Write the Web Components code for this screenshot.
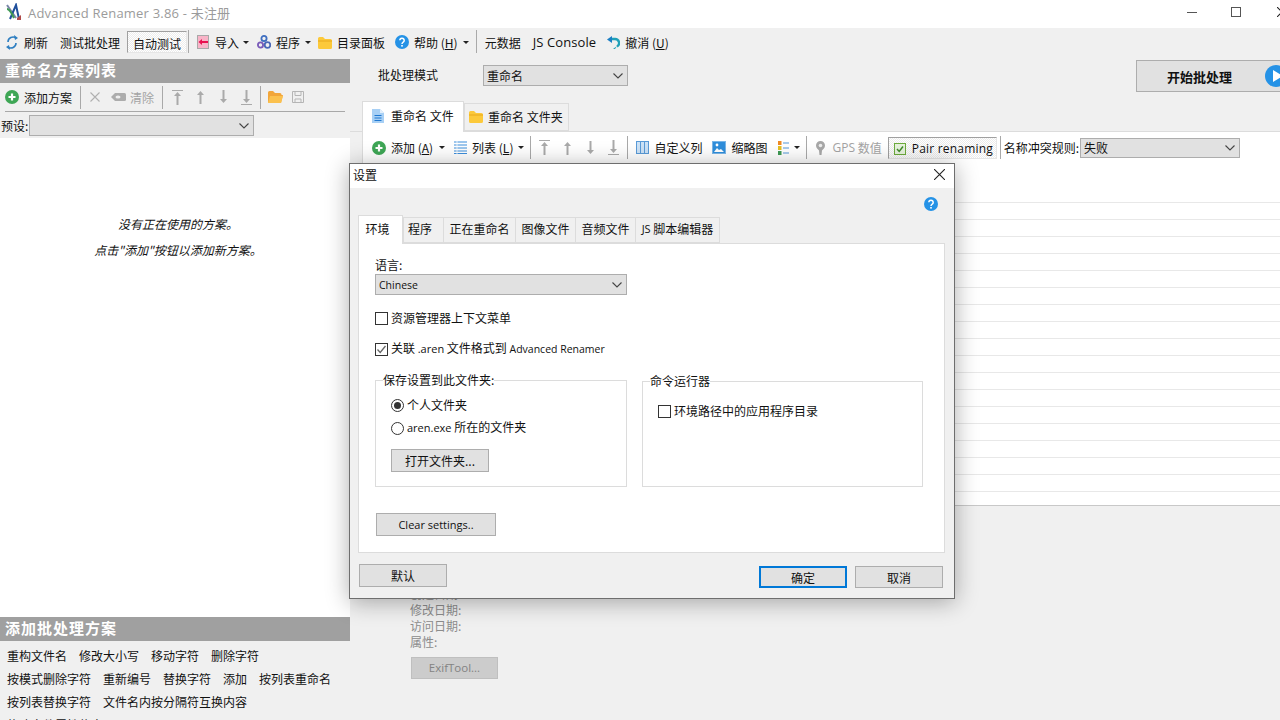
<!DOCTYPE html>
<html>
<head>
<meta charset="utf-8">
<title>Advanced Renamer</title>
<style>
html, body { margin: 0; padding: 0; background: #f0f0f0; overflow: hidden; }
body { font: 12px "Noto Sans CJK SC", "Open Sans", sans-serif; color: #111; }
</style>
</head>
<body>
<app-shell></app-shell>

<script>
const ICONS = {
    logo: [17, 18, '<path d="M1 2l9 13" stroke="#7a86a8" stroke-width="2" fill="none"/><path d="M4 16L10 2l3 14" stroke="#1f4f9c" stroke-width="2" fill="none"/><path d="M1 6c3 0 5 5 7 9" stroke="#3f9a54" stroke-width="2" fill="none"/><path d="M11 15l4-3v5h-4z" fill="#b04a4a"/>'],
    refresh: [12, 15, '<path d="M2 7a5 5 0 0 1 8-4" stroke="#2f7fc1" stroke-width="1.6" fill="none"/><path d="M10 8a5 5 0 0 1-8 4" stroke="#2f7fc1" stroke-width="1.6" fill="none"/><path d="M8 0l4 3-3 2z" fill="#2f7fc1"/><path d="M4 15l-4-3 3-2z" fill="#2f7fc1"/>'],
    import: [12, 14, '<rect x=".5" y=".5" width="11" height="13" fill="#f8b4c8" stroke="#a8a8a8"/><path d="M3 7h8" stroke="#e8114f" stroke-width="2"/><path d="M1.5 7L5 4v6z" fill="#e8114f"/>'],
    gears: [14, 14, '<circle cx="7" cy="3.5" r="2.6" fill="none" stroke="#3f6fc0" stroke-width="1.8"/><circle cx="3.5" cy="10" r="2.6" fill="none" stroke="#7a5bb8" stroke-width="1.8"/><circle cx="10.5" cy="10" r="2.8" fill="none" stroke="#4a68b8" stroke-width="1.8"/>'],
    folder: [14, 13, '<path d="M0 2.5Q0 1 1.5 1H5l2 2h5.500Q14 3 14 4.500V11.500Q14 13 12.500 13H1.500Q0 13 0 11.500z" fill="#fcc93a"/><path d="M0 5h14" stroke="#e8a91c"/>'],
    help: [14, 14, '<circle cx="7" cy="7" r="7" fill="#2592e6"/><path d="M4.800 5.300a2.200 2.100 0 1 1 3.400 1.800C7.300 7.700 7 8 7 9" stroke="#fff" stroke-width="1.500" fill="none"/><rect x="6.200" y="10" width="1.600" height="1.600" fill="#fff"/>'],
    undo: [13, 13, '<path d="M4 3h4a4 4 0 0 1 2 7.500" stroke="#20a0b8" stroke-width="2.400" fill="none"/><path d="M0 3.500L5 0v7z" fill="#1c7fc4"/><path d="M10 10l-2 3h-2z" fill="#20a0b8"/>'],
    plus: [14, 14, '<circle cx="7" cy="7" r="7" fill="#3ea655"/><path d="M7 3.500v7M3.500 7h7" stroke="#fff" stroke-width="2.200"/>'],
    cross: [10, 10, '<path d="M.5.5l9 9M9.500.5l-9 9" stroke="#b0b0b0" stroke-width="1.100"/>'],
    eraser: [15, 8, '<path d="M4 0h9.500Q15 0 15 1.500v5Q15 8 13.500 8H4L0 4z" fill="#acacac"/><ellipse cx="7" cy="4" rx="2.500" ry="1.500" fill="#eee"/>'],
    top: [11, 15, '<path d="M0 .5h11" stroke="#aaa"/><path d="M5.500 2L9 6H2z" fill="#aaa"/><path d="M5.500 5v10" stroke="#aaa" stroke-width="2"/>'],
    up: [7, 14, '<path d="M3.500 1L7 5H0z" fill="#aaa"/><path d="M3.500 4v10" stroke="#aaa" stroke-width="2"/>'],
    down: [7, 14, '<path d="M3.500 13L7 9H0z" fill="#aaa"/><path d="M3.500 0v10" stroke="#aaa" stroke-width="2"/>'],
    bottom: [11, 15, '<path d="M0 14.500h11" stroke="#aaa"/><path d="M5.500 13L9 9H2z" fill="#aaa"/><path d="M5.500 0v10" stroke="#aaa" stroke-width="2"/>'],
    folderDim: [15, 12, '<path d="M0 1.500Q0 0 1.500 0H5l2 2h5Q13.500 2 13.500 3.500V4H15l-2 8H1.500Q0 12 0 10.500z" fill="#f2a63a"/><path d="M2 5h13l-2 7H0z" fill="#fbc14e"/>'],
    save: [12, 12, '<path d="M.5.500h11v11H.500zM3 .500v4h6v-4M3 11.500V8h6v3.500" fill="none" stroke="#b5b5b5"/>'],
    doc: [12, 14, '<path d="M0 0h8l4 4v10H0z" fill="#a8d0f5"/><path d="M8 0l4 4H8z" fill="#e4f0fb"/><path d="M2.500 6.500h7M2.500 9h7M2.500 11.500h7" stroke="#1f78d1" stroke-width="1.200"/>'],
    list: [13, 13, '<path d="M0 1h13M0 4h13M0 7h13M0 10h13M0 12.500h13" stroke="#3d8fdc"/><path d="M3 0v13" stroke="#fff" stroke-width=".8"/>'],
    columns: [13, 13, '<rect x=".5" y=".5" width="12" height="12" fill="#cde3f7" stroke="#5a9bd8"/><path d="M4.500 0v13M8.500 0v13" stroke="#5a9bd8"/>'],
    thumb: [14, 13, '<rect x=".5" y=".5" width="13" height="12" fill="#2f8edb" stroke="#7ab6e8"/><path d="M2 11l3-4 2 2 2-1 3 3z" fill="#fff"/><circle cx="5" cy="4" r="1.400" fill="#fff"/>'],
    listview: [11, 14, '<rect width="3.500" height="4" fill="#f08a24"/><rect y="5" width="3.500" height="4" fill="#e6c020"/><rect y="10" width="3.500" height="4" fill="#3f9a54"/><path d="M5 2h6M5 7h6M5 12h6" stroke="#8cbbe6" stroke-width="1.600"/>'],
    pin: [9, 14, '<path d="M4.500 0a4.500 4.500 0 0 1 4.500 4.500C9 7 7 8 6 9.500L5.500 14h-2L3 9.500C2 8 0 7 0 4.500A4.500 4.500 0 0 1 4.500 0z" fill="#a8a8a8"/><circle cx="4.500" cy="4.500" r="1.800" fill="#eee"/>'],
    checked: [12, 12, '<rect x=".5" y=".5" width="11" height="11" fill="#e6f2dc" stroke="#6cab3c"/><path d="M3 6l2.200 2.400L9 3.500" stroke="#3f8a2a" stroke-width="1.500" fill="none"/>'],
    play: [22, 22, '<circle cx="11" cy="11" r="11" fill="#2592e6"/><path d="M8 5l10 6-10 6z" fill="#fff"/>'],
    min: [10, 1, '<path d="M0 .5h10" stroke="#555"/>'],
    max: [10, 10, '<rect x=".5" y=".5" width="9" height="9" fill="none" stroke="#555"/>'],
    close: [10, 10, '<path d="M0 0l10 10M10 0L0 10" stroke="#222" stroke-width="1.100"/>'],
    close2: [11, 11, '<path d="M0 0l11 11M11 0L0 11" stroke="#222" stroke-width="1.100"/>']
};

const chevron = '<svg width="10" height="6" viewBox="0 0 10 6"><path d="M.5.500L5 5 9.500.500" fill="none" stroke="#444" stroke-width="1.100"/></svg>';

class ArIcon extends HTMLElement {
    connectedCallback() {
        const [w, h, body] = ICONS[this.getAttribute('name')];
        this.attachShadow({ mode: 'open' }).innerHTML = `
            <style>:host { display: inline-flex; flex-shrink: 0; width: ${w}px; height: ${h}px; } svg { display: block; }</style>
            <svg width="${w}" height="${h}" viewBox="0 0 ${w} ${h}">${body}</svg>`;
    }
}

// toolbar button: optional icon, text in the slot, optional dropdown caret
class ToolItem extends HTMLElement {
    connectedCallback() {
        const icon = this.getAttribute('icon');
        const gap = this.getAttribute('gap') || 5;
        const caretGap = this.getAttribute('caret');
        this.attachShadow({ mode: 'open' }).innerHTML = `
            <style>
                :host { display: inline-flex; align-items: center; flex-shrink: 0; height: 22px; white-space: nowrap; box-sizing: border-box; color: #111; }
                :host([disabled]) { color: #a4a4a4; }
                :host([pressed]) {
                    padding: 2px 5px 0;
                    border: 1px solid #e6e6e6;
                    border-top-color: #a0a0a0;
                    border-left-color: #a0a0a0;
                    background: repeating-conic-gradient(#ececec 0 25%, #fff 0 50%) 0 0 / 2px 2px;
                }
                .ic { display: inline-flex; margin-right: ${gap}px; }
                .caret { width: 0; height: 0; margin-left: ${caretGap}px; border: 3px solid transparent; border-top: 3px solid #222; border-bottom: 0; }
                u { text-underline-offset: 1px; }
            </style>
            ${icon ? `<span class="ic"><ar-icon name="${icon}"></ar-icon></span>` : ''}
            <slot></slot>
            ${caretGap !== null ? '<span class="caret"></span>' : ''}`;
    }
}

class ToolSep extends HTMLElement {
    connectedCallback() {
        this.attachShadow({ mode: 'open' }).innerHTML = `
            <style>:host { display: block; flex-shrink: 0; width: 1px; height: 23px; background: #a9a9a9; }</style>`;
    }
}

class ToolBar extends HTMLElement {
    connectedCallback() {
        this.attachShadow({ mode: 'open' }).innerHTML = `
            <style>:host { display: flex; align-items: center; box-sizing: border-box; height: 31px; line-height: 15px; }</style>
            <slot></slot>`;
    }
}

class WinSelect extends HTMLElement {
    connectedCallback() {
        this.attachShadow({ mode: 'open' }).innerHTML = `
            <style>
                :host {
                    display: flex; align-items: center; justify-content: space-between; flex-shrink: 0;
                    box-sizing: border-box; height: 21px; padding: 0 4px 0 3px;
                    background: #e1e1e1; border: 1px solid #adadad; color: #111;
                }
            </style>
            <span><slot></slot></span>${chevron}`;
    }
}

class WinButton extends HTMLElement {
    connectedCallback() {
        this.attachShadow({ mode: 'open' }).innerHTML = `
            <style>
                :host {
                    display: flex; align-items: center; justify-content: center; flex-shrink: 0;
                    box-sizing: border-box; height: 23px;
                    background: #e1e1e1; border: 1px solid #adadad; color: #111;
                }
                :host([default]) { border: 2px solid #0078d7; }
                :host([disabled]) { background: #cccccc; border-color: #bfbfbf; color: #838383; }
            </style>
            <slot></slot>`;
    }
}

class WinCheck extends HTMLElement {
    connectedCallback() {
        const on = this.hasAttribute('checked');
        this.attachShadow({ mode: 'open' }).innerHTML = `
            <style>
                :host { display: flex; align-items: center; height: 14px; white-space: nowrap; }
                .box { box-sizing: border-box; width: 13px; height: 13px; margin-right: 3px; background: #fff; border: 1px solid #333; flex-shrink: 0; }
                .txt { padding-bottom: 2px; }
                svg { display: block; }
            </style>
            <span class="box">${on ? '<svg width="11" height="11" viewBox="0 0 11 11"><path d="M1.500 5.500L4.200 8.500 9.500 2" fill="none" stroke="#666" stroke-width="1.300"/></svg>' : ''}</span>
            <span class="txt"><slot></slot></span>`;
    }
}

class WinRadio extends HTMLElement {
    connectedCallback() {
        const on = this.hasAttribute('checked');
        this.attachShadow({ mode: 'open' }).innerHTML = `
            <style>
                :host { display: flex; align-items: center; height: 14px; white-space: nowrap; }
                .dot { display: flex; align-items: center; justify-content: center; box-sizing: border-box; width: 13px; height: 13px; margin-right: 3px; border: 1px solid #333; border-radius: 50%; background: #fff; flex-shrink: 0; }
                i { width: 7px; height: 7px; border-radius: 50%; background: #333; }
                .txt { padding-bottom: 2px; }
            </style>
            <span class="dot">${on ? '<i></i>' : ''}</span>
            <span class="txt"><slot></slot></span>`;
    }
}

class WinTab extends HTMLElement {
    connectedCallback() {
        this.attachShadow({ mode: 'open' }).innerHTML = `
            <style>
                :host {
                    display: flex; align-items: center; justify-content: center; flex-shrink: 0;
                    box-sizing: border-box; height: 27px; margin-left: -1px; padding-bottom: 3px;
                    background: #f0f0f0; border: 1px solid #dcdcdc; white-space: nowrap; color: #111;
                }
                :host([active]) { height: 30px; margin-left: 0; margin-bottom: -1px; background: #fff; border-bottom: 0; z-index: 1; }
            </style>
            <slot></slot>`;
    }
}

class GroupBox extends HTMLElement {
    connectedCallback() {
        this.attachShadow({ mode: 'open' }).innerHTML = `
            <style>
                :host { display: block; box-sizing: border-box; }
                fieldset { box-sizing: border-box; height: 100%; margin: 0; padding: 0; border: 1px solid #dcdcdc; }
                legend { margin-left: 7px; padding: 0; line-height: 14px; background: #fff; }
                .in { padding: 0 15px; }
            </style>
            <fieldset><legend>${this.getAttribute('label')}</legend><div class="in"><slot></slot></div></fieldset>`;
    }
}

class PaneTitle extends HTMLElement {
    connectedCallback() {
        this.attachShadow({ mode: 'open' }).innerHTML = `
            <style>
                :host {
                    display: flex; align-items: center; flex-shrink: 0; box-sizing: border-box;
                    height: 24px; padding: 0 0 3px 5px; background: #a0a0a0; color: #fff;
                    font-weight: 700; font-size: 15px; letter-spacing: 1px;
                }
            </style>
            <slot></slot>`;
    }
}

class SchemePane extends HTMLElement {
    connectedCallback() {
        const methods = ['重构文件名', '修改大小写', '移动字符', '删除字符', '按模式删除字符', '重新编号', '替换字符', '添加', '按列表重命名', '按列表替换字符', '文件名内按分隔符互换内容', '修改文件属性信息'];
        this.attachShadow({ mode: 'open' }).innerHTML = `
            <style>
                :host { display: flex; flex-direction: column; flex-shrink: 0; width: 350px; height: 100%; overflow: hidden; }
                tool-bar { height: 28px; padding-left: 5px; }
                .rule { height: 1px; margin: 0 5px 0 5px; background: #a8a8a8; }
                .preset { display: flex; align-items: center; height: 21px; margin: 3px 0 2px 1px; }
                .preset win-select { width: 225px; margin-left: 1px; }
                .empty { display: flex; flex-direction: column; flex: 1; align-items: center; padding: 73px 0 0 6px; box-sizing: border-box; background: #fff; font-style: italic; line-height: 26px; }
                .methods { display: flex; flex-wrap: wrap; gap: 0 12px; box-sizing: border-box; height: 79px; padding: 3px 10px 0 7px; line-height: 23px; overflow: hidden; }
            </style>
            <pane-title>重命名方案列表</pane-title>
            <tool-bar>
                <tool-item icon="plus" style="margin-left:0">添加方案</tool-item>
                <tool-sep style="margin-left:8px"></tool-sep>
                <tool-item icon="cross" disabled style="margin-left:9px"></tool-item>
                <tool-item icon="eraser" gap="4" disabled style="margin-left:6px">清除</tool-item>
                <tool-sep style="margin-left:8px"></tool-sep>
                <tool-item icon="top" gap="0" style="margin-left:9px"></tool-item>
                <tool-item icon="up" gap="0" style="margin-left:14px"></tool-item>
                <tool-item icon="down" gap="0" style="margin-left:16px"></tool-item>
                <tool-item icon="bottom" gap="0" style="margin-left:14px"></tool-item>
                <tool-sep style="margin-left:8px"></tool-sep>
                <tool-item icon="folderDim" gap="0" style="margin-left:7px"></tool-item>
                <tool-item icon="save" gap="0" style="margin-left:9px"></tool-item>
            </tool-bar>
            <div class="rule"></div>
            <div class="preset">预设:<win-select></win-select></div>
            <div class="empty"><div>没有正在使用的方案。</div><div>点击"添加"按钮以添加新方案。</div></div>
            <pane-title>添加批处理方案</pane-title>
            <div class="methods">${methods.map(m => `<span>${m}</span>`).join('')}</div>`;
    }
}

class BatchPane extends HTMLElement {
    connectedCallback() {
        const rows = Array(18).fill('<div class="row"></div>').join('');
        this.attachShadow({ mode: 'open' }).innerHTML = `
            <style>
                :host { display: block; flex: 1; min-width: 0; height: 100%; overflow: hidden; }
                .mode { display: flex; height: 42px; padding-left: 28px; line-height: 15px; }
                .mode .lbl { flex-shrink: 0; width: 105px; margin-top: 8px; }
                .mode win-select { width: 145px; margin-top: 6px; }
                .start { margin: 1px 0 0 508px; flex-shrink: 0; width: 180px; height: 32px; justify-content: flex-start; padding-left: 30px; font-weight: 700; font-size: 13px; }
                .start span { width: 98px; }
                .strip { display: flex; align-items: flex-end; height: 30px; padding-left: 12px; border-bottom: 1px solid #dcdcdc; }
                .strip .a { width: 102px; height: 31px; gap: 7px; justify-content: flex-start; padding-left: 9px; }
                .strip .b { width: 105px; height: 28px; margin-left: 0; gap: 5px; justify-content: flex-start; padding-left: 4px; padding-bottom: 1px; }
                .page { margin-left: 12px; background: #fff; border-left: 1px solid #dcdcdc; border-bottom: 1px solid #c8c8c8; height: 374px; box-sizing: border-box; }
                tool-bar { padding-left: 9px; }
                .en { font-family: "Open Sans", "Noto Sans CJK SC", sans-serif; }
                .list { padding-top: 23px; width: 100%; }
                .row { box-sizing: border-box; height: 17px; border-bottom: 1px solid #e8e8e8; }
                .info { padding: 80px 0 0 60px; line-height: 16px; color: #8c8c8c; font-size: 12px; }
                .info win-button { width: 87px; margin: 7px 0 0 1px; height: 22px; font-size: 11.500px; }
            </style>
            <div class="mode">
                <span class="lbl">批处理模式</span>
                <win-select>重命名</win-select>
                <win-button class="start"><span>开始批处理</span><ar-icon name="play"></ar-icon></win-button>
            </div>
            <div class="strip">
                <win-tab active class="a"><ar-icon name="doc"></ar-icon>重命名 文件</win-tab>
                <win-tab class="b"><ar-icon name="folder"></ar-icon>重命名 文件夹</win-tab>
            </div>
            <div class="page">
                <tool-bar>
                    <tool-item icon="plus" caret="6">添加 (<u>A</u>)</tool-item>
                    <tool-item icon="list" caret="5" style="margin-left:9px">列表 (<u>L</u>)</tool-item>
                    <tool-sep style="margin-left:6px"></tool-sep>
                    <tool-item icon="top" gap="0" style="margin-left:8px"></tool-item>
                    <tool-item icon="up" gap="0" style="margin-left:14px"></tool-item>
                    <tool-item icon="down" gap="0" style="margin-left:16px"></tool-item>
                    <tool-item icon="bottom" gap="0" style="margin-left:14px"></tool-item>
                    <tool-sep style="margin-left:8px"></tool-sep>
                    <tool-item icon="columns" style="margin-left:8px">自定义列</tool-item>
                    <tool-item icon="thumb" style="margin-left:10px">缩略图</tool-item>
                    <tool-item icon="listview" gap="0" caret="5" style="margin-left:11px"></tool-item>
                    <tool-sep style="margin-left:6px"></tool-sep>
                    <tool-item icon="pin" gap="7" disabled style="margin-left:9px"><span class="en">GPS</span>&nbsp;数值</tool-item>
                    <tool-item icon="checked" gap="6" pressed style="margin-left:6px;width:109px"><span class="en" style="letter-spacing:.2px">Pair renaming</span></tool-item>
                    <tool-sep style="margin-left:3px"></tool-sep>
                    <span style="margin-left:3px;white-space:nowrap">名称冲突规则:</span>
                    <win-select style="width:160px;height:20px;margin-left:1px">失败</win-select>
                </tool-bar>
                <div class="list">${rows}</div>
            </div>
            <div class="info">
                <div>创建日期:</div>
                <div>修改日期:</div>
                <div>访问日期:</div>
                <div>属性:</div>
                <win-button disabled><span class="en">ExifTool...</span></win-button>
            </div>`;
    }
}

class SettingsDialog extends HTMLElement {
    connectedCallback() {
        this.attachShadow({ mode: 'open' }).innerHTML = `
            <style>
                :host {
                    position: absolute; left: 349px; top: 163px; box-sizing: border-box;
                    width: 606px; height: 436px; background: #f0f0f0;
                    border: 1px solid #6e6e6e; box-shadow: 0 3px 22px rgba(0, 0, 0, .32);
                    color: #111; line-height: 15px;
                }
                .title { display: flex; align-items: center; justify-content: space-between; box-sizing: border-box; height: 24px; padding: 0 9px 3px 3px; background: #fff; }
                .help { display: flex; justify-content: flex-end; height: 27px; padding: 9px 16px 0 0; box-sizing: border-box; }
                .tabs { display: flex; align-items: flex-end; height: 28px; padding-left: 8px; }
                .tabs win-tab { height: 26px; }
                .tabs win-tab[active] { height: 29px; }
                .page { box-sizing: border-box; width: 587px; height: 310px; margin-left: 8px; padding: 13px 0 0 16px; background: #fff; border: 1px solid #dcdcdc; }
                .lang { width: 252px; margin-top: 2px; }
                .c1 { margin-top: 16px; }
                .c2 { margin-top: 17px; }
                .groups { display: flex; margin-top: 17px; height: 114px; }
                .g1 { width: 252px; }
                .g2 { width: 281px; margin: 1px 0 0 15px; height: 113px; }
                .g1 win-radio { margin-top: 11px; }
                .g1 win-radio + win-radio { margin-top: 9px; }
                .open { width: 98px; margin-top: 14px; }
                .g2 win-check { margin-top: 16px; }
                .clear { width: 120px; margin: 26px 0 0 1px; }
                .foot { display: flex; align-items: flex-start; padding: 11px 11px 0 9px; }
                .foot .w { width: 88px; }
                .foot .ok { margin: 2px 0 0 auto; height: 22px; }
                .foot .no { margin: 2px 0 0 8px; height: 22px; }
                .en { font-family: "Open Sans", "Noto Sans CJK SC", sans-serif; font-size: 11px; }
                .sm { font-size: 10.500px; }
            </style>
            <div class="title"><span>设置</span><ar-icon name="close2"></ar-icon></div>
            <div class="help"><ar-icon name="help"></ar-icon></div>
            <div class="tabs">
                <win-tab active style="width:45px;padding-right:6px">环境</win-tab>
                <win-tab style="width:41px;margin-left:0;padding-right:7px">程序</win-tab>
                <win-tab style="width:73px">正在重命名</win-tab>
                <win-tab style="width:61px">图像文件</win-tab>
                <win-tab style="width:61px">音频文件</win-tab>
                <win-tab style="width:85px"><span class="en" style="font-size:11px">JS</span>&nbsp;脚本编辑器</win-tab>
            </div>
            <div class="page">
                <div>语言:</div>
                <win-select class="lang"><span class="en sm">Chinese</span></win-select>
                <win-check class="c1">资源管理器上下文菜单</win-check>
                <win-check class="c2" checked>关联 <span class="en">.aren</span> 文件格式到 <span class="en sm">Advanced Renamer</span></win-check>
                <div class="groups">
                    <group-box class="g1" label="保存设置到此文件夹:">
                        <win-radio checked>个人文件夹</win-radio>
                        <win-radio><span class="en">aren.exe</span> 所在的文件夹</win-radio>
                        <win-button class="open">打开文件夹...</win-button>
                    </group-box>
                    <group-box class="g2" label="命令运行器">
                        <win-check>环境路径中的应用程序目录</win-check>
                    </group-box>
                </div>
                <win-button class="clear"><span class="en">Clear settings..</span></win-button>
            </div>
            <div class="foot">
                <win-button class="w">默认</win-button>
                <win-button class="w ok" default>确定</win-button>
                <win-button class="w no">取消</win-button>
            </div>`;
    }
}

class AppShell extends HTMLElement {
    connectedCallback() {
        this.attachShadow({ mode: 'open' }).innerHTML = `
            <style>
                :host { display: flex; flex-direction: column; position: relative; width: 1280px; height: 720px; overflow: hidden; background: #f0f0f0; }
                .titlebar { display: flex; align-items: center; height: 28px; padding: 0 0 4px 6px; box-sizing: border-box; background: #fff; color: #9b9b9b; flex-shrink: 0; }
                .titlebar .name { margin-left: 5px; font: 13px "Open Sans", "Noto Sans CJK SC", sans-serif; letter-spacing: .2px; }
                .winbtns { display: flex; margin-left: auto; align-items: center; gap: 34px; margin-right: -7px; }
                tool-bar { align-items: flex-start; padding-top: 3px; }
                tool-sep { margin-top: -1px; }
                .main { display: flex; flex: 1; min-height: 0; }
                .en { font: 13px "Open Sans", "Noto Sans CJK SC", sans-serif; letter-spacing: .1px; }
            </style>
            <div class="titlebar">
                <ar-icon name="logo"></ar-icon>
                <span class="name">Advanced Renamer 3.86 - 未注册</span>
                <div class="winbtns"><ar-icon name="min"></ar-icon><ar-icon name="max"></ar-icon><ar-icon name="close" style="margin-left:2px"></ar-icon></div>
            </div>
            <tool-bar>
                <tool-item icon="refresh" gap="6" style="margin-left:6px">刷新</tool-item>
                <tool-item style="margin-left:12px">测试批处理</tool-item>
                <tool-item pressed style="margin-left:7px">自动测试</tool-item>
                <tool-sep style="margin-left:1px"></tool-sep>
                <tool-item icon="import" gap="6" caret="4" style="margin-left:8px">导入</tool-item>
                <tool-item icon="gears" caret="5" style="margin-left:8px">程序</tool-item>
                <tool-item icon="folder" style="margin-left:7px">目录面板</tool-item>
                <tool-item icon="help" caret="5" style="margin-left:10px">帮助 (<u>H</u>)</tool-item>
                <tool-sep style="margin-left:7px"></tool-sep>
                <tool-item style="margin-left:8px">元数据</tool-item>
                <tool-item style="margin-left:12px"><span class="en">JS Console</span></tool-item>
                <tool-item icon="undo" style="margin-left:11px">撤消 (<u>U</u>)</tool-item>
            </tool-bar>
            <div class="main">
                <scheme-pane></scheme-pane>
                <batch-pane></batch-pane>
            </div>
            <settings-dialog></settings-dialog>`;
    }
}

customElements.define('ar-icon', ArIcon);
customElements.define('tool-item', ToolItem);
customElements.define('tool-sep', ToolSep);
customElements.define('tool-bar', ToolBar);
customElements.define('win-select', WinSelect);
customElements.define('win-button', WinButton);
customElements.define('win-check', WinCheck);
customElements.define('win-radio', WinRadio);
customElements.define('win-tab', WinTab);
customElements.define('group-box', GroupBox);
customElements.define('pane-title', PaneTitle);
customElements.define('scheme-pane', SchemePane);
customElements.define('batch-pane', BatchPane);
customElements.define('settings-dialog', SettingsDialog);
customElements.define('app-shell', AppShell);
</script>
</body>
</html>
